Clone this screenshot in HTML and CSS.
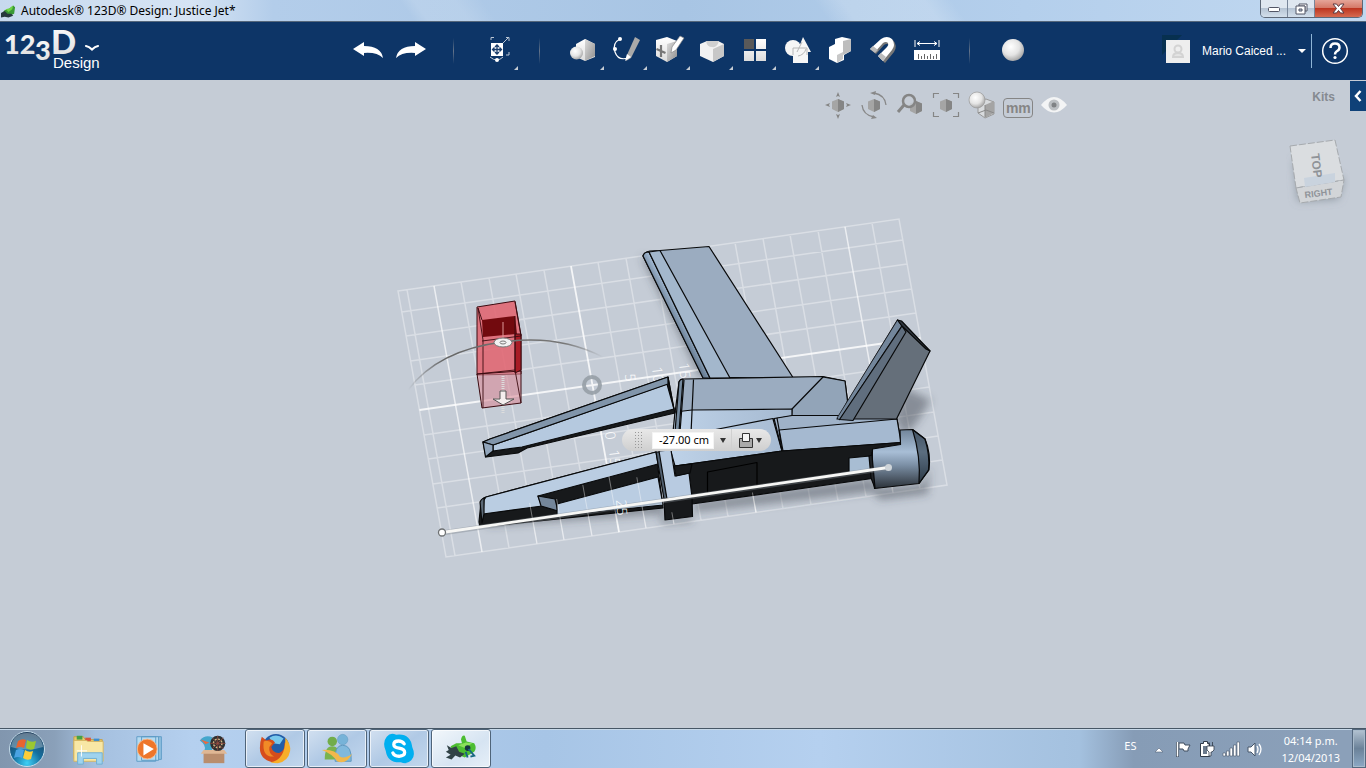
FILE: index.html
```html
<!DOCTYPE html>
<html lang="es">
<head>
<meta charset="utf-8">
<title>Autodesk® 123D® Design: Justice Jet*</title>
<link rel="stylesheet" href="styles.css">
</head>
<body>
<svg class="defs" width="0" height="0" aria-hidden="true">
  <defs>
    <linearGradient id="white" x1="0" y1="0" x2="0" y2="1"><stop offset="0" stop-color="#fff"/><stop offset="1" stop-color="#dcdcdc"/></linearGradient>
    <linearGradient id="side" x1="0" y1="0" x2="1" y2="1"><stop offset="0" stop-color="#ddd"/><stop offset="1" stop-color="#8e8e8e"/></linearGradient>
    <radialGradient id="ball" cx=".4" cy=".35" r=".65"><stop offset="0" stop-color="#fff"/><stop offset=".6" stop-color="#e4e4e4"/><stop offset="1" stop-color="#a9a9a9"/></radialGradient>
    <g id="mini-cube"><path d="M0-6l6 2.500v7.500l-6 3-6-3v-7.500z" fill="#a5a5a5"/><path d="M0-6v13l6-3v-7.500z" fill="#858585"/></g>
  </defs>
</svg>

<div class="titlebar">
  <svg class="app-icon" viewBox="0 0 16 14" aria-hidden="true"><path d="M1 10l3-4 4-1 5-4 2 2-1 7-5 2-3-2-4 2z" fill="#3a9a35"/><path d="M5 5l4-1 4-3-1 4-4 3z" fill="#6ed444"/><path d="M0 9l4-2 3 3 4 0 2 2-5 2-4-1-4 1z" fill="#26383e"/></svg>
  <h1 class="title">Autodesk® 123D® Design: Justice Jet*</h1>
  <div class="win-controls">
    <button class="win-btn" aria-label="Minimizar"><svg width="14" height="8" viewBox="0 0 14 8"><rect x="1.500" y="2.500" width="11" height="4" rx="1" fill="#fff" stroke="#535666"/></svg></button>
    <button class="win-btn" aria-label="Restaurar"><svg width="13" height="12" viewBox="0 0 13 12"><path d="M4 1h8v7h-2V3H4z" fill="#fff" stroke="#535666"/><path d="M1 3h9v8H1zM4 6v2h3V6z" fill="#fff" stroke="#535666" fill-rule="evenodd"/></svg></button>
    <button class="win-btn close" aria-label="Cerrar"><svg width="13" height="11" viewBox="0 0 13 11"><path d="M1 1h3.500l2 2.500 2-2.500H12L8.500 5.500 12 10H8.500l-2-2.500-2 2.500H1l3.500-4.500z" fill="#fff" stroke="#5a3a42"/></svg></button>
  </div>
</div>

<header class="appbar">
  <button class="brand" aria-label="123D Design">
    <svg width="104" height="54" viewBox="0 0 104 54">
      <g class="logo" fill="url(#white)"><text x="4" y="30" font-size="27">12</text><text x="35" y="36" font-size="27">3</text><text x="51" y="30" font-size="33">D</text></g>
      <text class="brand-sub" x="53" y="44">Design</text>
      <path d="M86 22q3 .5 6 3.500 3-3 6-3.500" fill="none" stroke="#fff" stroke-width="2.200" stroke-linecap="round"/>
    </svg>
  </button>
  <nav class="tools" aria-label="Herramientas">
    <button class="tool" aria-label="Deshacer"><svg viewBox="0 0 32 32"><path d="M1 15L12 8v4q17 0 19 12-6-6-19-5v3z" fill="#fff"/></svg></button>
    <button class="tool" aria-label="Rehacer"><svg viewBox="0 0 32 32"><path d="M31 15L20 8v4Q3 12 1 24q6-6 19-5v3z" fill="#fff"/></svg></button>
    <span class="sep"></span>
    <button class="tool more" aria-label="Transformar"><svg viewBox="0 0 32 32"><g fill="none" stroke="#b9c5d4"><path d="M10 6V3.500h3M25 3.500h3V7M28 18v3h-3M21 10l6-6M9 23q7 6 13 0"/></g><path d="M10 9h12v13H10z" fill="#fff"/><path d="M16 11v9M11.500 15.500h9M14 13l2-2 2 2M14 18l2 2 2-2M13.500 13.500l-2 2 2 2M18.500 13.500l2 2-2 2" stroke="#193c6b" stroke-width="1.300" fill="none"/><circle cx="16" cy="26" r="2" fill="#fff"/></svg></button>
    <span class="sep"></span>
    <button class="tool more" aria-label="Primitivas"><svg viewBox="0 0 32 32"><path d="M18 5l10 5v13l-10 4-9-4V10z" fill="url(#white)"/><path d="M18 5l10 5v12l-10 5z" fill="url(#side)"/><circle cx="9.500" cy="19" r="6.500" fill="url(#ball)"/></svg></button>
    <button class="tool more" aria-label="Boceto"><svg viewBox="0 0 32 32"><path d="M10 5Q2 9 5 18t13 6" fill="none" stroke="#fff" stroke-width="1.200"/><path d="M25 3l5 3-9 18-5 3 1-6z" fill="#a9a9a9"/><path d="M17 20l4 3-6 4z" fill="#fff"/><circle cx="10" cy="5" r="2" fill="#fff"/><circle cx="5" cy="15" r="2" fill="#fff"/></svg></button>
    <button class="tool more" aria-label="Construir"><svg viewBox="0 0 32 32"><path d="M3 6l11-3 10 4v15l-10 6-11-6z" fill="url(#white)"/><path d="M14 10l10-3v15l-10 6z" fill="url(#side)"/><path d="M8 11v12M3.500 15l9 4" stroke="#777" stroke-width="2.200"/><path d="M27 2l4 2-8 12-5 3 1-6z" fill="#fff" stroke="#888" stroke-width=".7"/></svg></button>
    <button class="tool more" aria-label="Modificar"><svg viewBox="0 0 32 32"><path d="M4 10l7-3h11l6 3v12l-11 6-13-6z" fill="#f2f2f2"/><path d="M10 7h13q-2 7-7 6-5 0-6-6z" fill="#d0d0d0"/><path d="M17 15l11-5v12l-11 6z" fill="#c7c7c7"/></svg></button>
    <button class="tool more" aria-label="Patrón"><svg viewBox="0 0 32 32"><path d="M5 5h10v10H5z" fill="#595959"/><path d="M17 5h10v10H17zM5 17h10v10H5zM17 17h10v10H17z" fill="url(#white)"/></svg></button>
    <button class="tool more" aria-label="Agrupar"><svg viewBox="0 0 32 32"><circle cx="11" cy="14" r="8" fill="#f6f6f6"/><path d="M21 3l8 15H15zM11 17h15v12H11z" fill="#f6f6f6"/><path d="M11 21v-7h14v7M15 18l5-10M24 15q-2 6-8 7" fill="none" stroke="#b8b8b8"/></svg></button>
    <button class="tool" aria-label="Combinar"><svg viewBox="0 0 32 32"><path d="M4 13l6-3V5l7-2 9 2v12l-7 4v5l-7 3-8-4z" fill="#fff"/><path d="M18 7l8-2v12l-8 4z" fill="#bdbdbd"/><path d="M12 21l6-3v7l-6 4z" fill="#c8c8c8"/></svg></button>
    <button class="tool" aria-label="Ajustar"><svg viewBox="0 0 32 32"><path d="M2 15l11-10q6-4 11 0 5 6 1 12L16 28l-5-5 8-9q2-2 1-4-2-2-5 0l-8 9z" fill="#777" transform="translate(1 1)"/><path d="M2 15l11-10q6-4 11 0 4 6 0 11l-9 11-5-5 9-9q2-2 1-4-2-2-5 0l-8 9z" fill="#fff"/><path d="M2 15l3-3 5 4-3 3zM13 19l5 4-3 4-5-5z" fill="#bbb"/></svg></button>
    <button class="tool" aria-label="Medir"><svg viewBox="0 0 32 32"><path d="M4 6v7M28 6v7M6 9.500h20M9 7.500l-3 2 3 2M23 7.500l3 2-3 2" fill="none" stroke="#fff"/><path d="M3 16h26v10H3z" fill="#fff"/><path d="M7.500 25v-5M10.500 25v-3M13.500 25v-5M16.500 25v-3M19.500 25v-5M22.500 25v-3M25.500 25v-5" stroke="#666"/></svg></button>
    <span class="sep"></span>
    <button class="tool" aria-label="Material"><svg viewBox="0 0 32 32"><circle cx="16" cy="16" r="11" fill="url(#ball)"/></svg></button>
  </nav>
  <div class="account">
    <button class="user"><svg class="avatar" viewBox="0 0 28 28"><path d="M0 20V0h20z" fill="#07304f"/><path d="M4 5h24v23H4z" fill="#eee"/><circle cx="16" cy="14" r="3.500" fill="none" stroke="#d3d3d3" stroke-width="2"/><path d="M11 22q0-4 5-4t5 4z" fill="#e4e4e4" stroke="#d3d3d3" stroke-width="2"/></svg><span class="user-name">Mario Caiced ...</span><span class="caret"></span></button>
    <button class="help" aria-label="Ayuda"><svg width="28" height="28" viewBox="0 0 28 28"><circle cx="14" cy="14" r="12.300" fill="none" stroke="#fff" stroke-width="1.500"/><path d="M9.500 11q0-4.500 4.500-4.500t4.500 4q0 2.500-3 4-1.500 1-1.500 3" fill="none" stroke="#fff" stroke-width="2.500"/><circle cx="14" cy="20.500" r="1.600" fill="#fff"/></svg></button>
  </div>
</header>

<main class="viewport">
  <svg class="scene" viewBox="0 80 1366 648" role="img" aria-label="Justice Jet">
    <defs>
      <filter id="soft" x="-30%" y="-30%" width="160%" height="160%"><feGaussianBlur stdDeviation="4"/></filter>
      <linearGradient id="cyl" x1="0" y1="0" x2="0" y2="1"><stop offset="0" stop-color="#71859a"/><stop offset=".38" stop-color="#a8bed6"/><stop offset=".6" stop-color="#7c90a6"/><stop offset="1" stop-color="#2b3138"/></linearGradient>
      <linearGradient id="edge" gradientUnits="userSpaceOnUse" x1="669" y1="318" x2="680" y2="312"><stop offset="0" stop-color="#596d82"/><stop offset="1" stop-color="#9fb6cf"/></linearGradient>
      <linearGradient id="hull" x1="0" y1="0" x2="1" y2="0"><stop offset="0" stop-color="#bed2e8"/><stop offset="1" stop-color="#a5b9d0"/></linearGradient>
      <linearGradient id="arc" x1="0" y1="0" x2="1" y2="0"><stop offset="0" stop-color="#666" stop-opacity="0"/><stop offset=".18" stop-color="#666"/><stop offset=".8" stop-color="#777"/><stop offset="1" stop-color="#777" stop-opacity="0"/></linearGradient>
    </defs>

    <g transform="matrix(1 -.1437 .1805 1 398 291)" fill="none" stroke="#fff">
      <path d="M0 0H501V266H0zM9 0V266M63 0V266M91 0V266M118 0V266M146 0V266M200 0V266M228 0V266M255 0V266M282 0V266M337 0V266M365 0V266M392 0V266M420 0V266M474 0V266M0 21H501M0 45H501M0 70H501M0 94H501M0 144H501M0 168H501M0 193H501M0 217H501M0 241H501" stroke-opacity=".36" stroke-width="1.500"/>
      <path d="M36 0V266M310 0V266M447 0V266" stroke-opacity=".65" stroke-width="1.500"/>
      <path d="M173 0V266M0 119H501" stroke-opacity=".8" stroke-width="1.800"/>
    </g>
    <circle cx="592" cy="385" r="8" fill="none" stroke="#969ea6" stroke-opacity=".9" stroke-width="4"/>
    <g class="ruler">
      <text transform="translate(625 374) rotate(85)">5</text>
      <text transform="translate(652 367) rotate(85)">10</text>
      <text transform="translate(679 363) rotate(85)">15</text>
      <text transform="translate(605 432) rotate(85)">0</text>
      <text transform="translate(609 450) rotate(85)">15</text>
    </g>

    <g fill="#3c434b" fill-opacity=".45" filter="url(#soft)">
      <path d="M641 256L700 378h14L655 262zM484 518l180-16v16l30-2v-14l180-24 4 10 44-4 8-18-2 28-48 6-8-8-178 20-2 10-30 2-2-10-172 12z"/>
      <path d="M905 388l26 12-15 24-12 12-10-18z"/>
    </g>

    <g stroke="#08090a" stroke-width="1.200" stroke-linejoin="round">
      <path d="M643 256q1-4 7-5l10-.5 49-4 84 131H703z" fill="#9bacc0"/>
      <path d="M643 256q1-4 6-4l61 126h-7z" fill="url(#edge)"/>
      <path d="M649 252l11-1.500 70 127.500h-20z" fill="#a3b7cc"/>

      <path d="M675 413l4-31q1-3 5-3l139-2.500 22 4.500 2.500 20-6 18-150 3-17 30z" fill="#9bacc0"/>
      <path d="M792 409l31-32 22 4 2.500 20-7 16-49-1z" fill="#92a4b8"/>
      <path d="M675 412l17-2 100-1v7l-19 3 9 32-107 15-4-14z" fill="url(#hull)"/>
      <path d="M684 380l-4 52M693.500 379.500l-2.500 54" fill="none"/>
      <path d="M679 382q1-3 4-3l-4 53h-4z" fill="#758a9f"/>
      <path d="M774 418.500l18-3 45 0 60 3.500 4 23-119 8.500z" fill="#9fb2c8"/>
      <path d="M779 430l118-11 4 23.500-119 8.500z" fill="#a5b9d0"/>
      <path d="M708 431l65-12.500M777 418l6 33" fill="none"/>

      <path d="M897.500 320l32.500 31-33.500 68-59.500 0z" fill="#656f7a"/>
      <path d="M897.500 320l4 6-62 94-2.500-2z" fill="#73869b" stroke-width=".6"/>
      <path d="M902 326l4 6-53 88.500-13.500-1z" fill="#606e7e"/>
      <path d="M897.500 320l4 1 28.500 30-4-2-24-23z" fill="#30373f"/>

      <path d="M675 466l107-15 119-8.500-1 5-28 5v26L692 504z" fill="#17191b"/>
      <path d="M707.500 494v-22l49.500-9.500v24" fill="none" stroke="#000"/>
      <path d="M849 458l21-2 2 15-23 2z" fill="#a8bdd3"/>
      <path d="M900 430l12.500-.5L925 439q6 14 4 31l-10 13.500-44.500 5q-3-20-2-39.500l28-4.500z" fill="url(#cyl)"/>
      <path d="M912.500 429.500L925 439q5 16 3.500 31l-9.500 13.500q2-27-6.500-54z" fill="#1e2b39" fill-opacity=".55"/>
      <path d="M869 456l3-1 3 33-4-10z" fill="#202327"/>

      <path d="M483 442l7-3 178-62 6 32 1 4-148 35-9 5-32 4z" fill="#17191b"/>
      <path d="M493 445l174-61 7 25-152 38-29 4z" fill="#b5c9df"/>
      <path d="M483 442l7-3 178-62v7L493 445z" fill="#8195aa"/>
      <path d="M483 442l10 3v6l-7.500 6z" fill="#91a5bb"/>
      <path d="M668 377l6 33" fill="none"/>

      <path d="M481 502q1-4 5-5l170-45 7 56-183 19-1-5z" fill="#17191b"/>
      <path d="M486 497l170-45 2 12-120 32 4 10-59 8 1-14z" fill="#bacde2"/>
      <path d="M538 496l17 3 3 12-17-5z" fill="#74869a"/>
      <path d="M557 504l101-27 5 28-106 11z" fill="#bacde2"/>
      <path d="M480 502q1-3 4-4l0 16-2 9z" fill="#5b6875"/>
      <path d="M656 452h4l7 46 -3 1z" fill="#526171"/>
      <path d="M659 451l12-1 4 26 14-3 3 24-25 2z" fill="#b8cbe1"/>
      <path d="M664 499l28-2.500.5 20-27.500 3.500z" fill="#17191b"/>
      <path d="M674 466l18-2-2 9-14 3z" fill="#17191b"/>
    </g>

    <g transform="matrix(1 -.1437 .1805 1 398 291)" fill="none" stroke="#fff" stroke-opacity=".4"><path d="M91 225V266M118 225V266M146 215V266M173 210V266M200 215V266M228 254V266M310 246V266"/></g>
    <path d="M442 533L888 468" stroke="#7d858c" stroke-opacity=".4" stroke-width="5"/>
    <path d="M442 532.500L888 467.500" stroke="#f7f7f5" stroke-width="2.800"/>
    <g class="ruler"><text transform="translate(616 500) rotate(85)">25</text></g>
    <circle cx="888.500" cy="467.500" r="3.500" fill="#ced4d9"/>
    <circle cx="442" cy="532.500" r="3.500" fill="#fff" stroke="#6d7072" stroke-width="1.300"/>

    <g stroke="#3b0b10" stroke-linejoin="round">
      <path d="M477 307l38-6 6 34v39l-44 1z" fill="#e2626d" fill-opacity=".85"/>
      <path d="M477 374l44-3v32l-39 5z" fill="#d98b98" fill-opacity=".6"/>
      <path d="M482 320l33-4 2 18-34 3z" fill="#720a0e" stroke="none"/>
      <path d="M515 334h6v36l-6 3z" fill="#a81c25"/>
      <path d="M482 320l-4-12 5 32v68M515 302l6 34-39 5M515 316v54l-38 4M515 370l6 33" fill="none" stroke-width=".9"/>
    </g>
    <path d="M408 390q30-40 95-48 55-8 100 15" fill="none" stroke="url(#arc)" stroke-width="1.600"/>
    <path d="M503 322v18" stroke="#d99" stroke-width="1"/>
    <path d="M503 376v38" stroke="#ddd" stroke-dasharray="1 1" stroke-width="3"/>
    <ellipse cx="503" cy="342.500" rx="9" ry="4.500" fill="#f2f2f2" stroke="#777"/>
    <ellipse cx="503" cy="342.500" rx="3" ry="1.500" fill="none" stroke="#777"/>
    <path d="M500 391h6v8h8l-11 6-10-6h7z" fill="#f4eeee" stroke="#555"/>
  </svg>

  <div class="overlay">
    <nav class="view-tools" aria-label="Vista">
      <button class="view-btn" aria-label="Encuadre"><svg viewBox="0 0 30 30"><use href="#mini-cube" x="15" y="15"/><path d="M15 2l2 5-2-1-2 1zM15 29l2-5-2 1-2-1zM2 15l5-2-1 2 1 2zM28 15l-5-2 1 2-1 2z" fill="#858585"/></svg></button>
      <button class="view-btn" aria-label="Órbita"><svg viewBox="0 0 30 30"><use href="#mini-cube" x="15" y="15"/><path d="M3 15q1 10 12 12M27 15Q26 5 15 3" fill="none" stroke="#888" stroke-width="1.300"/><path d="M18 28l-6 1 2-4zM11 3l6-2-1 4z" fill="#888"/></svg></button>
      <button class="view-btn" aria-label="Zoom"><svg viewBox="0 0 30 30"><use href="#mini-cube" x="21" y="17"/><path d="M9 15l-6 7" stroke="#858585" stroke-width="3"/><circle cx="14" cy="11" r="6" fill="#c5ccd4" fill-opacity=".8" stroke="#858585" stroke-width="2.500"/></svg></button>
      <button class="view-btn" aria-label="Ajustar vista"><svg viewBox="0 0 30 30"><use href="#mini-cube" x="15" y="15"/><path d="M2.500 8V3.500H8M22 3.500h5.500V8M27.500 22v4.500H22M8 26.500H2.500V22" fill="none" stroke="#858585" stroke-width="1.200"/></svg></button>
      <button class="view-btn" aria-label="Sombreado"><svg viewBox="0 0 30 30"><path d="M11 11l8-2 8 3v12l-9 4-7-5z" fill="#d8dbde" stroke="#999"/><path d="M18 15l9-4v12l-9 5z" fill="#a4a4a4"/><path d="M18 15v12M11 23l8-3 8 3" stroke="#888" fill="none"/><circle cx="10" cy="10" r="8" fill="url(#ball)" stroke="#999" stroke-width=".7"/></svg></button>
      <button class="view-btn units">mm</button>
      <button class="view-btn" aria-label="Visibilidad"><svg viewBox="0 0 30 30"><path d="M2 15q13-16 26 0-13 15-26 0z" fill="#f3f4f5"/><circle cx="15" cy="15" r="5.500" fill="#bbbfc3"/><circle cx="15" cy="15" r="2.500" fill="#7f8285"/></svg></button>
    </nav>
    <span class="kits-label">Kits</span>
  </div>
  <button class="kits-toggle" aria-label="Kits"><svg width="8" height="12" viewBox="0 0 8 12"><path d="M6.500 1L2 6l4.500 5" fill="none" stroke="#fff" stroke-width="2.500"/></svg></button>

  <button class="viewcube" aria-label="TOP RIGHT">
    <svg width="64" height="76" viewBox="0 0 64 76">
      <path d="M8 24l4 42 40-2 6-20z" fill="#76818c" fill-opacity=".7" filter="url(#soft)"/>
      <path d="M4 11l45-6 9 40-48 8z" fill="#dadde0" stroke="#a6aaae" stroke-dasharray="7 2"/>
      <path d="M10 53l48-8-3 17-41 6z" fill="#d2d5d8" stroke="#a6aaae" stroke-dasharray="7 2"/>
      <path d="M18 43l31-5v9l-30 5z" fill="#c9d3de"/>
      <text class="cube-text" transform="translate(25 19) rotate(83)" font-size="12">TOP</text>
      <text class="cube-text" transform="translate(19 63) rotate(-7)" font-size="9">RIGHT</text>
    </svg>
  </button>

  <form class="dimension">
    <span class="grip"></span>
    <input class="dim-input" type="text" value="-27.00 cm" aria-label="Distancia">
    <button class="dim-drop" type="button" aria-label="Unidades"><span class="caret dark"></span></button>
    <button class="dim-op" type="button" aria-label="Operación"><svg width="14" height="15" viewBox="0 0 14 15"><path d="M.5 5.500h13v9H.500z" fill="#aaa" stroke="#333"/><path d="M3.500.5h7v8h-7z" fill="#f4f4f4" stroke="#333"/></svg><span class="caret dark"></span></button>
  </form>
</main>

<footer class="taskbar">
  <button class="start" aria-label="Inicio"><svg width="38" height="38" viewBox="0 0 38 38"><defs><radialGradient id="orb" cx=".5" cy=".9" r=".9"><stop offset="0" stop-color="#3fd0f6"/><stop offset=".45" stop-color="#146f9f"/><stop offset="1" stop-color="#243f5c"/></radialGradient></defs><circle cx="19" cy="19" r="17.500" fill="url(#orb)" stroke="#c6dcea"/><path d="M3 17Q5 3 19 3t16 14q-16 5-32 0z" fill="#fff" fill-opacity=".3"/><path d="M10 11q4-3 8-1l-2 8q-4-2-8 0z" fill="#e8642f"/><path d="M19 10q4 3 9 1l-2 8q-4 2-8-1z" fill="#9bc832"/><path d="M8 20q4-2 8 0l-2 8q-4-2-8 0z" fill="#4aa3e2"/><path d="M17 20q4 3 8 1l-2 8q-4 2-8-1z" fill="#fccd3a"/></svg></button>
  <div class="apps">
    <button class="app" aria-label="Explorador"><svg viewBox="0 0 36 36"><path d="M2 5h10l2 3h18v20H2z" fill="#e8c96b" stroke="#c3a04a"/><path d="M5 4h6v4H5z" fill="#45a146"/><path d="M14 6h6v4h-6z" fill="#d8553c"/><path d="M23 7h6v4h-6z" fill="#3d8fd0"/><path d="M2 9h13l2 1h16v21H2z" fill="#f8e7a5" stroke="#d4b661"/><path d="M6 22h26v12h-6v-6H12v6H6z" fill="#9fd3ee" stroke="#6eaed2"/><path d="M10 14v12M5 20h11" stroke="#fff"/></svg></button>
    <button class="app" aria-label="Reproductor"><svg viewBox="0 0 36 36"><path d="M11 5h18v24H11z" fill="#8fc0e0" stroke="#5e9bc6"/><path d="M8 5h18v25H8zM3 5h20v26H3z" fill="#b6dbf1" stroke="#5e9bc6"/><circle cx="14" cy="18" r="10.500" fill="#ee762a" stroke="#f7b98b"/><path d="M10 12l11 6-11 7z" fill="#fff"/></svg></button>
    <button class="app" aria-label="Juegos"><svg viewBox="0 0 36 36"><path d="M8 20h22v13H8z" fill="#b98d6d"/><path d="M8 19h22l3 4H5z" fill="#dfb794"/><path d="M4 9q6-7 14-3l-1 13H9q2-5-5-10z" fill="#45a7cc"/><path d="M5 8l9 3-4 2z" fill="#e66b43"/><circle cx="23" cy="12" r="8" fill="#2e3030"/><circle cx="23" cy="12" r="4.500" fill="none" stroke="#d0ba88" stroke-width="1.500" stroke-dasharray="2 1.500"/><path d="M15 12h16M23 4v16M17 6l12 12M29 6L17 18" stroke="#a05042" stroke-width=".8"/></svg></button>
    <button class="app open" aria-label="Firefox"><svg viewBox="0 0 36 36"><circle cx="19" cy="16" r="14" fill="#235da7"/><path d="M12 6q8-5 15 1l-4 6-7-1z" fill="#78c8ec"/><path d="M4 5l5 4q6-3 9 2l-4 5q2 7 9 6 6-3 5-11 5 5 1 13-5 9-14 8Q2 29 2 17q0-7 2-12z" fill="#d64d1c"/><path d="M29 6q6 7 5 14-2 11-13 13-5 0-8-1 16-2 16-26z" fill="#f7ae28"/><path d="M6 10q5-2 9 2l-3 4q-1 7 5 10Q4 27 6 10z" fill="#f18a27"/></svg></button>
    <button class="app open" aria-label="Messenger"><svg viewBox="0 0 36 36"><circle cx="13" cy="10" r="5" fill="#72ad4a"/><path d="M5 29q0-14 8-14 8 0 8 14z" fill="#7ab34e"/><circle cx="24" cy="8" r="5.500" fill="#77b3d8" stroke="#5d97bd" stroke-width=".5"/><path d="M16 31q-1-17 8-17 10 0 9 17z" fill="#81b9dd" stroke="#5d97bd"/><path d="M2 19q14-1 19 7 5 3 13-3-6 12-16 8-5-8-16-12z" fill="#f2b84c"/></svg></button>
    <button class="app open" aria-label="Skype"><svg viewBox="0 0 36 36"><path d="M5 5q4-5 10-2 15-2 17 13 4 9-1 14-5 5-11 2Q6 33 4 20 0 11 5 5z" fill="#00aff0"/><path d="M23.500 12.500q-2-3-6-3-5 0-5 3.700 0 3 5.500 4 6 1 6 4.500t-6 4q-5 0-6.500-3.500" fill="none" stroke="#fff" stroke-width="3.500" stroke-linecap="round"/></svg></button>
    <button class="app open active" aria-label="123D Design"><svg viewBox="0 0 36 36"><path d="M7 15l6-3 6 0-1-4q1-5 4-4l2 6 8 2q3 5 0 9l-10 6-12-5z" fill="#4cbd32"/><path d="M15 14l8-3 7 1-8 5z" fill="#8ae15b"/><path d="M3 14l5 3 5-2 3 6 6 2-5 4-5-2-4 4-6-2 5-3-5-3 3-2z" fill="#304246"/><circle cx="25" cy="17" r="3" fill="#173540"/><path d="M26 18l6 7-4 1M23 21l2 6" stroke="#176781" stroke-width="2" fill="none"/></svg></button>
  </div>
  <div class="tray">
    <span class="lang">ES</span>
    <button class="tray-btn up" aria-label="Mostrar iconos"><svg viewBox="0 0 18 18"><path d="M5 12l4-4 4 4z" fill="#fff" stroke="#56657a" stroke-width=".6"/></svg></button>
    <button class="tray-btn" aria-label="Centro de actividades"><svg viewBox="0 0 18 18"><path d="M3.500 2v15" stroke="#3e4c5e" stroke-width="3"/><path d="M5 3h5l1 2h5l-2 4v2h-4L9 9H5z" fill="#fff" stroke="#3e4c5e"/><path d="M3.500 2v14.500" stroke="#fff" stroke-width="1.500"/></svg></button>
    <button class="tray-btn" aria-label="Energía"><svg viewBox="0 0 18 18"><path d="M2.500 3.500h3v-2h4v2h2v13h-9z" fill="#fff" stroke="#303b49"/><path d="M5 6h4v8H5z" fill="#6b7a8c"/><path d="M9 6h7v4l-2 2h-1v4h-2v-4l-2-2zM11 6V2M14.500 6V2" fill="#fff" stroke="#303b49" stroke-width=".8"/></svg></button>
    <button class="tray-btn" aria-label="Red"><svg viewBox="0 0 18 18"><path d="M1 13h2.500v3H1zM4.500 11H7v5H4.500zM8 8h2.500v8H8zM11.500 5H14v11h-2.500zM15 2h2.500v14H15z" fill="#fff" stroke="#46566a" stroke-width=".6"/></svg></button>
    <button class="tray-btn" aria-label="Volumen"><svg viewBox="0 0 18 18"><path d="M2 7h3l4-4v13l-4-4H2z" fill="#fff" stroke="#46566a"/><path d="M11 6q2 3 0 7M13 4q4 5 0 11" fill="none" stroke="#fff" stroke-width="1.300"/></svg></button>
    <div class="clock"><time>04:14 p.m.</time><time>12/04/2013</time></div>
    <button class="show-desktop" aria-label="Mostrar escritorio"></button>
  </div>
</footer>
</body>
</html>
```
FILE: styles.css
```css
* { box-sizing: border-box; }

body {
  margin: 0;
  height: 100vh;
  display: flex;
  flex-direction: column;
  overflow: hidden;
  font-family: "Liberation Sans", Arial, sans-serif;
  background: #c5ccd6;
}

button {
  border: 0;
  padding: 0;
  background: none;
  color: inherit;
  font: inherit;
  display: flex;
  align-items: center;
  justify-content: center;
}

.defs { position: absolute; }

.titlebar {
  flex: none;
  height: 22px;
  display: flex;
  align-items: center;
  gap: 5px;
  padding-left: 1px;
  background: linear-gradient(55deg, transparent 0 30%, #ffffff20 31% 34%, transparent 36% 60%, #ffffff30 62% 68%, transparent 70%), linear-gradient(90deg, #c7d9ee, #d6e4f4 14%, #b3cdea 20%, #a8c5e4 50%, #b4cfec 75%, #c1d8f0);
  border-bottom: 1px solid #55677b;
}

.app-icon { width: 15px; height: 14px; }

.title {
  margin: 0;
  flex: 1;
  font: 400 12px/18px "Noto Sans", sans-serif;
  color: #000;
}

.win-controls {
  display: flex;
  align-self: flex-start;
  margin-right: 3px;
  border: 1px solid #5d6878;
  border-top: 0;
  border-radius: 0 0 5px 5px;
  overflow: hidden;
}

.win-btn {
  width: 27px;
  height: 17px;
  background: linear-gradient(#dfe7f0 45%, #b6c4d4 50%, #d3dfeb);
  border-right: 1px solid #78869a;
}

.win-btn.close {
  width: 47px;
  border-right: 0;
  background: linear-gradient(#e5a598, #d57a68 45%, #bd3620 50%, #d66a50);
}

.appbar {
  flex: none;
  height: 58px;
  display: grid;
  grid-template-columns: 1fr auto 1fr;
  align-items: center;
  background: #0d3567;
  color: #fff;
}

.brand { justify-self: start; }
.logo { font-family: Lato, sans-serif; font-weight: 900; }
.brand-sub { font: 400 15px "Liberation Sans", sans-serif; fill: #fff; }

.tools {
  display: flex;
  align-items: center;
  padding-left: 14px;
}

.tool, .sep { width: 43px; height: 46px; }
.tool { position: relative; padding-bottom: 2px; }
.tool svg { width: 32px; height: 32px; }

.tool.more::after {
  content: "";
  position: absolute;
  right: 0;
  bottom: 4px;
  border-left: 4px solid transparent;
  border-bottom: 4px solid #c5ccd4;
}

.sep {
  height: 26px;
  background: linear-gradient(transparent, #64748a, transparent) center / 1px 100% no-repeat;
}

.account {
  justify-self: end;
  display: flex;
  align-items: center;
  padding-right: 17px;
}

.user { height: 34px; border-right: 1px solid #8fb5d6; padding-right: 5px; font-size: 12px; }
.avatar { width: 28px; height: 28px; margin: 0 12px 5px 0; }
.user-name { margin-right: 12px; }

.caret {
  border: 4px solid transparent;
  border-top-color: #fff;
  border-bottom: 0;
}

.caret.dark { border-width: 5px 3px 0; border-top-color: #333; }
.help { margin-left: 9px; }

.viewport { flex: 1; min-height: 0; position: relative; overflow: hidden; }
.scene { display: block; width: 100%; height: 100%; }
.ruler { font: 300 14px "Open Sans", sans-serif; fill: #fff; }

.overlay {
  position: absolute;
  inset: 10px 31px auto 0;
  display: flex;
  justify-content: flex-end;
  gap: 243px;
}

.view-tools { display: flex; align-items: center; gap: 6px; }
.view-btn { width: 30px; height: 30px; color: #858585; }
.view-btn svg { width: 30px; height: 30px; }

.view-btn.units {
  height: 20px;
  margin-top: 6px;
  border: 1px solid #858585;
  border-radius: 4px;
  font-size: 14px;
  font-weight: 700;
}

.kits-label { color: #858a91; font-size: 12px; font-weight: 700; line-height: 14px; }

.kits-toggle {
  position: absolute;
  top: 1px;
  right: 0;
  width: 16px;
  height: 30px;
  background: #0f4178;
}

.viewcube { position: absolute; top: 55px; right: 16px; }
.cube-text { font-family: "Liberation Sans", sans-serif; font-weight: 700; fill: #8f9398; }

.dimension {
  position: absolute;
  left: calc(50% - 61px);
  top: calc(50% + 25px);
  display: flex;
  align-items: center;
  height: 22px;
  border-radius: 11px;
  background: linear-gradient(#e8e8e8, #cfcfcf);
}

.grip {
  width: 30px;
  height: 18px;
  background: radial-gradient(circle, #999 0 1px, transparent 1px) 0 0 / 3px 3px content-box;
  padding: 0 9px 0 12px;
}

.dim-input {
  width: 62px;
  height: 17px;
  border: 1px solid #f4f4f4;
  padding: 0 0 1px 6px;
  background: #fff;
  color: #000;
  font: 400 11px/14px "Noto Sans", sans-serif;
}

.dim-drop { width: 18px; height: 22px; border-right: 1px solid #d0d0d0; }
.dim-op { height: 22px; gap: 3px; padding: 0 9px 0 7px; }

.taskbar {
  flex: none;
  height: 40px;
  display: flex;
  align-items: stretch;
  border-top: 1px solid #475766;
  box-shadow: inset 0 1px #c7d9ea;
  background: linear-gradient(90deg, #8196ae, #8aa0b9 4%, #a5c0df 7%, #b5d0ef 14%, #a7c5e6 40%, #b5d0ef 60%, #a4c1df 79%, #869cb6 83%, #8ba0b9 98%);
}

.start { width: 54px; }
.apps { flex: 1; display: flex; gap: 2px; padding-left: 5px; }
.app { width: 60px; border-radius: 3px; }
.app svg { width: 34px; height: 34px; }

.app.open {
  border: 1px solid #4f6479;
  box-shadow: inset 0 0 0 1px #ffffffaa;
  background: linear-gradient(145deg, #d2e0f0, #b0c9e5 50%, #c2d7ed);
}

.app.active { background: linear-gradient(145deg, #f2f7fb, #d6e4f2 60%, #e6eff8); }

.tray {
  display: flex;
  align-items: center;
  color: #fff;
  font: 400 11px/17px "Noto Sans", sans-serif;
}

.lang { margin: 0 11px 6px 0; }
.tray-btn { width: 24px; height: 24px; }
.tray-btn svg { width: 18px; height: 18px; }
.clock { display: flex; flex-direction: column; align-items: center; margin: 0 12px 0 14px; }

.show-desktop {
  width: 14px;
  align-self: stretch;
  border: 1px solid #55697f;
  background: linear-gradient(#b4c3d2, #6b8299 50%, #8ca8c4);
  box-shadow: inset 0 0 0 1px #a9bbcb;
}
```
